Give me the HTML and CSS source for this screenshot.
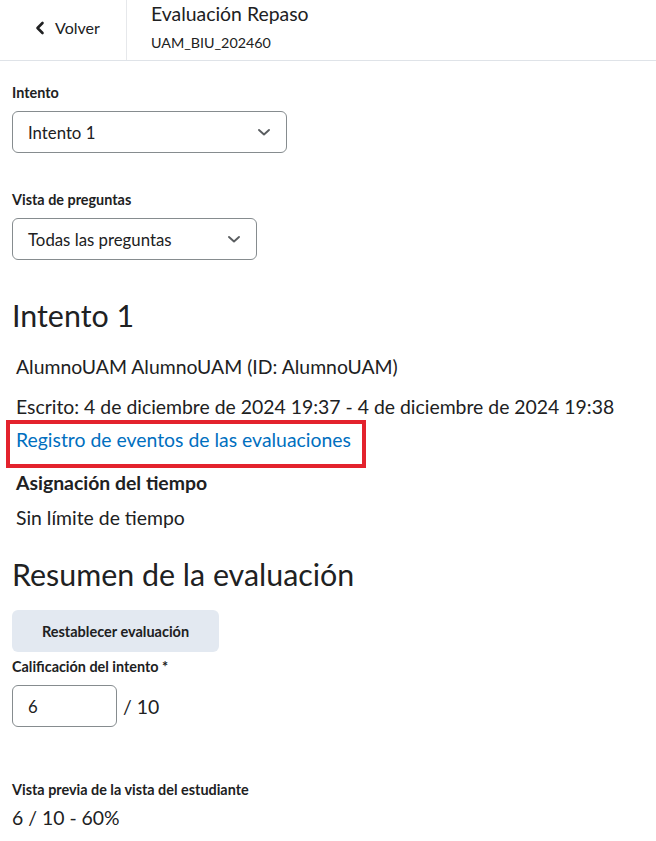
FILE: index.html
```html
<!DOCTYPE html>
<html lang="es">
<head>
<meta charset="UTF-8">
<title>Evaluación Repaso</title>
<link rel="stylesheet" href="styles.css">
</head>
<body>
    <div class="topbar">
        <a class="back" href="#">
            <svg class="back-icon" width="10" height="14" viewBox="0 0 10 14">
                <path d="M7.5 2 L2.5 7 L7.5 12" fill="none" stroke="#202122" stroke-width="2.6" stroke-linecap="round" stroke-linejoin="round"/>
            </svg>
            Volver
        </a>
        <div class="title">
            <div class="title-main">Evaluación Repaso</div>
            <div class="title-sub">UAM_BIU_202460</div>
        </div>
    </div>

    <div class="content">
        <div class="field">
            <div class="label">Intento</div>
            <div class="select select-attempt">
                <span>Intento 1</span>
                <svg width="14" height="14" viewBox="0 0 14 14"><path d="M2 5 L7 9.5 L12 5" fill="none" stroke="#5a5d60" stroke-width="1.9" stroke-linecap="round" stroke-linejoin="round"/></svg>
            </div>
        </div>

        <div class="field">
            <div class="label">Vista de preguntas</div>
            <div class="select select-view">
                <span>Todas las preguntas</span>
                <svg width="14" height="14" viewBox="0 0 14 14"><path d="M2 5 L7 9.5 L12 5" fill="none" stroke="#5a5d60" stroke-width="1.9" stroke-linecap="round" stroke-linejoin="round"/></svg>
            </div>
        </div>

        <h2 class="heading heading-attempt">Intento 1</h2>

        <div class="info">
            <p class="info-line">AlumnoUAM AlumnoUAM (ID: AlumnoUAM)</p>
            <p class="info-line info-written">Escrito: 4 de diciembre de 2024 19:37 - 4 de diciembre de 2024 19:38</p>
            <div class="highlight"><a class="link" href="#">Registro de eventos de las evaluaciones</a></div>
            <p class="info-line info-strong">Asignación del tiempo</p>
            <p class="info-line info-limit">Sin límite de tiempo</p>
        </div>

        <h2 class="heading heading-summary">Resumen de la evaluación</h2>

        <button class="btn">Restablecer evaluación</button>

        <div class="label label-grade">Calificación del intento *</div>
        <div class="grade">
            <div class="grade-input">6</div>
            <span class="grade-out">/ 10</span>
        </div>

        <div class="label label-preview">Vista previa de la vista del estudiante</div>
        <div class="preview">6 / 10 - 60%</div>
    </div>
</body>
</html>
```

FILE: styles.css
```css
body {
    margin: 0;
    font-family: Lato, "Open Sans", sans-serif;
    color: #202122;
    background-color: #fff;
}

a {
    text-decoration: none;
}

.topbar {
    display: flex;
    height: 60px;
    border-bottom: 1px solid #dfe3e8;
}

.back {
    display: flex;
    align-items: center;
    gap: 10px;
    width: 127px;
    box-sizing: border-box;
    padding-left: 35px;
    padding-bottom: 5px;
    border-right: 1px solid #e6e8eb;
    color: #202122;
    font-size: 16px;
}

.title {
    padding-left: 24px;
    padding-top: 2px;
}

.title-main {
    font-size: 19.4px;
    line-height: 24px;
}

.title-sub {
    font-size: 14.3px;
    line-height: 18px;
    margin-top: 8px;
}

.content {
    padding: 0 12px;
}

.field {
    margin-top: 23px;
}

.field + .field {
    margin-top: 38px;
}

.label {
    font-size: 14.4px;
    line-height: 17px;
    font-weight: 700;
    margin-bottom: 10px;
}

.select {
    display: flex;
    align-items: center;
    justify-content: space-between;
    box-sizing: border-box;
    height: 42px;
    padding: 0 15px;
    border: 1px solid #868c8f;
    border-radius: 6px;
    font-size: 16.8px;
}

.select-attempt {
    width: 275px;
}

.select-view {
    width: 245px;
}

.heading {
    font-weight: 400;
    font-size: 30.4px;
    line-height: 36px;
    margin: 0;
}

.heading-attempt {
    margin-top: 37px;
}

.info {
    margin-top: 21px;
    padding-left: 4px;
}

.info p {
    margin: 0;
}

.info-line {
    font-size: 19.4px;
    line-height: 26px;
}

.info-written {
    margin-top: 14px !important;
}

.info-strong {
    font-weight: 700;
    margin-top: 2px !important;
}

.info-limit {
    margin-top: 9px !important;
}

.highlight {
    margin-left: -10px;
    width: 360px;
    height: 48px;
    box-sizing: border-box;
    border: 4px solid #e3222d;
    padding-left: 6px;
    padding-top: 3px;
    line-height: 26px;
}

.link {
    color: #006fbf;
    font-size: 19.4px;
}

.heading-summary {
    margin-top: 25px;
}

.btn {
    display: block;
    margin-top: 18px;
    width: 207px;
    height: 42px;
    border: none;
    border-radius: 6px;
    background-color: #e3e9f1;
    color: #202122;
    font-family: Lato, sans-serif;
    font-size: 14.5px;
    font-weight: 700;
}

.label-grade {
    margin-top: 6px;
}

.grade {
    display: flex;
    align-items: center;
    gap: 6px;
}

.grade-input {
    box-sizing: border-box;
    width: 105px;
    height: 42px;
    padding-left: 15px;
    border: 1px solid #868c8f;
    border-radius: 6px;
    display: flex;
    align-items: center;
    font-size: 16.8px;
}

.grade-out {
    font-size: 19.4px;
}

.label-preview {
    margin-top: 54px;
    margin-bottom: 8px;
}

.preview {
    font-size: 19.4px;
    line-height: 23px;
}
```
